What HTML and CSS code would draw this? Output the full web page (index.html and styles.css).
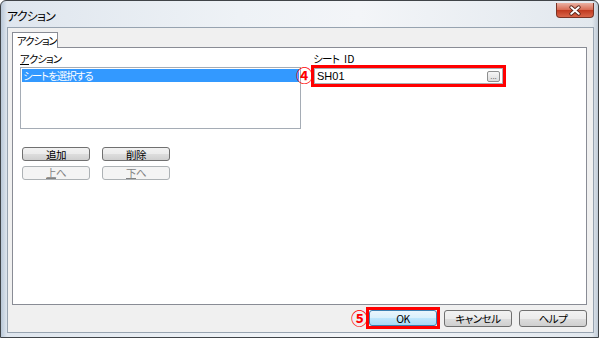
FILE: index.html
```html
<!DOCTYPE html>
<html lang="ja">
<head>
    <meta charset="UTF-8">
    <title>アクション</title>
    <link rel="stylesheet" href="styles.css">
</head>
<body>

    <div class="window">
        <div class="titlebar">
            <span class="title">アクション</span>
            <span class="close">
                <svg width="38" height="15" viewBox="0 0 38 15">
                    <path d="M15 4 L23 11 M23 4 L15 11" stroke="#5a2418" stroke-width="4" stroke-linecap="round"/>
                    <path d="M15 4 L23 11 M23 4 L15 11" stroke="#ffffff" stroke-width="2" stroke-linecap="round"/>
                </svg>
            </span>
        </div>

        <div class="client">
            <div class="tabs">
                <div class="tab">アクション</div>
            </div>

            <div class="panel">
                <div class="col-left">
                    <div class="label"><span class="acc">ア</span>クション</div>
                    <div class="listbox">
                        <div class="item selected">シートを選択する</div>
                    </div>
                    <div class="btn-grid">
                        <button class="btn">追加</button>
                        <button class="btn">削除</button>
                        <button class="btn" disabled><span class="acc">上</span>へ</button>
                        <button class="btn" disabled><span class="acc">下</span>へ</button>
                    </div>
                </div>

                <div class="col-right">
                    <div class="label">シート <span class="latin">ID</span></div>
                    <div class="mark">
                        <span class="num num-4">④</span>
                        <div class="field">
                            <span>SH01</span>
                            <span class="dots">...</span>
                        </div>
                    </div>
                </div>
            </div>

            <div class="footer">
                <div class="mark mark-ok">
                    <span class="num num-5">⑤</span>
                    <button class="btn big default">OK</button>
                </div>
                <button class="btn big">キャンセル</button>
                <button class="btn big">ヘルプ</button>
            </div>
        </div>
    </div>

</body>
</html>
```

FILE: styles.css
```css
body {
    margin: 0;
    background: #ffffff;
    font-family: "Noto Sans CJK JP", "Liberation Sans", sans-serif;
    font-size: 10.5px;
    font-feature-settings: "palt";
    color: #000000;
}
.window {
    box-sizing: border-box;
    width: 599px;
    height: 338px;
    border: 1px solid #404448;
    border-radius: 6px 6px 0 0;
    background: linear-gradient(to right, #b9c8d8 0, #dfe6ee 6px, #eef2f6 40%, #f3f5f8 60%, #e2e8ee calc(100% - 6px), #bfcad6 100%);
    display: flex;
    flex-direction: column;
}
.titlebar {
    height: 26px;
    display: flex;
    align-items: flex-start;
}
.title {
    margin: 6px 0 0 6px;
    font-size: 12px;
    letter-spacing: -0.8px;
}
.close {
    margin: 2px 4px 0 auto;
    width: 38px;
    height: 15px;
    box-sizing: border-box;
    border: 1px solid #7a3325;
    border-top: none;
    border-radius: 0 0 4px 4px;
    background: linear-gradient(#eab1a3, #d86a52 50%, #c0391f 51%, #d9664a);
    display: flex;
}
.client {
    flex: 1;
    margin: 0 4px 4px 6px;
    border: 1px solid #97a3b0;
    background: #f0f0f0;
    display: flex;
    flex-direction: column;
    padding: 4px 6px 0 4px;
}
.tabs {
    display: flex;
}
.tab {
    width: 46px;
    height: 16px;
    box-sizing: border-box;
    border: 1px solid #898c95;
    border-bottom: none;
    background: #ffffff;
    padding: 1px 0 0 4px;
    line-height: 13px;
    letter-spacing: -1.2px;
    white-space: nowrap;
    overflow: hidden;
    margin-bottom: -1px;
    position: relative;
}
.panel {
    height: 258px;
    box-sizing: border-box;
    border: 1px solid #898c95;
    background: #ffffff;
    padding: 4px 0 0 7px;
    display: flex;
    gap: 10px;
}
.label {
    height: 13px;
    line-height: 13px;
    letter-spacing: -1px;
    white-space: nowrap;
}
.acc {
    display: inline-block;
    line-height: 11px;
    border-bottom: 1px solid #000000;
}
.btn:disabled .acc {
    border-bottom-color: #838383;
}
.col-left {
    width: 281px;
    display: flex;
    flex-direction: column;
}
.listbox {
    margin-top: 2px;
    height: 62px;
    box-sizing: border-box;
    border: 1px solid #a5acb5;
    padding: 1px;
}
.item {
    height: 13px;
    line-height: 13px;
    padding-left: 1px;
    letter-spacing: -1px;
}
.item.selected {
    background: #3399ff;
    color: #ffffff;
}
.btn-grid {
    margin-top: 18px;
    margin-left: 2px;
    display: grid;
    grid-template-columns: 68px 68px;
    column-gap: 12px;
    row-gap: 5px;
}
.btn {
    height: 14px;
    box-sizing: border-box;
    border: 1px solid #707070;
    border-radius: 3px;
    background: linear-gradient(#f2f2f2, #ebebeb 50%, #dddddd 51%, #cfcfcf);
    font-family: inherit;
    font-size: 10.5px;
    font-feature-settings: "palt";
    letter-spacing: -0.5px;
    line-height: 11px;
    padding: 0;
    color: #000000;
}
.btn:disabled {
    border-color: #adb2b5;
    background: #f4f4f4;
    color: #838383;
}
.col-right {
    display: flex;
    flex-direction: column;
}
.col-right .label {
    padding-left: 2px;
    letter-spacing: -0.6px;
}
.latin {
    margin-left: 3px;
    letter-spacing: 0;
}
.mark {
    position: relative;
    border: 3px solid #ff0000;
    display: flex;
}
.num {
    position: absolute;
    color: #ff0000;
    font-size: 17px;
    font-weight: bold;
    line-height: 16px;
}
.num-4 {
    left: -18px;
    top: -1px;
}
.num-5 {
    left: -18px;
    top: 0;
}
.field {
    width: 189px;
    height: 16px;
    box-sizing: border-box;
    border: 1px solid #abadb3;
    display: flex;
    align-items: center;
    padding: 0 2px 0 2px;
    font-family: "Liberation Sans", sans-serif;
    font-size: 11px;
}
.dots {
    margin-left: auto;
    width: 13px;
    height: 11px;
    box-sizing: border-box;
    border: 1px solid #8e8f8f;
    border-radius: 2px;
    background: linear-gradient(#f6f6f6, #dcdcdc);
    font-size: 8px;
    line-height: 10px;
    text-align: center;
    color: #444444;
}
.footer {
    display: flex;
    justify-content: flex-end;
    align-items: center;
    margin-top: 2px;
}
.mark-ok {
    margin-right: 4px;
}
.btn.big {
    width: 68px;
    height: 17px;
}
.btn.default {
    height: 16px;
    border-color: #3c7fb1;
    background: linear-gradient(#eaf6fd, #d9f0fc 50%, #bee6fd 51%, #a7d9f5);
}
.footer > .btn {
    margin-right: 7px;
}
.footer > .btn:last-child {
    margin-right: 0;
}
```
